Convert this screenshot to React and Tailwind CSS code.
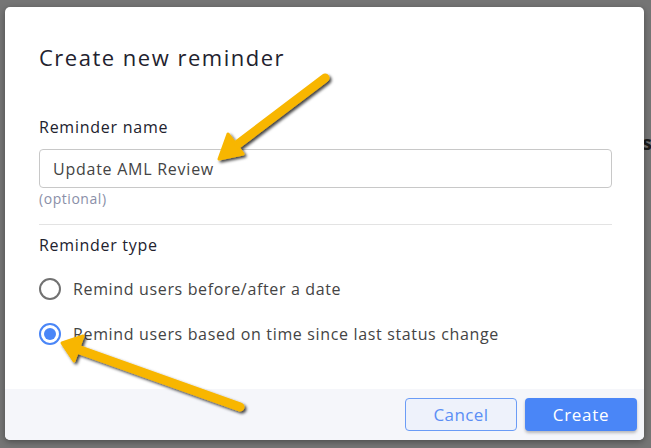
import React from "react";

const font = { fontFamily: '"Open Sans", "Noto Sans", sans-serif' };

const Arrows = () => (
  <svg
    className="absolute inset-0 pointer-events-none z-20"
    width="651"
    height="448"
    viewBox="0 0 651 448"
  >
    <defs>
      <filter id="sh" x="-20%" y="-20%" width="140%" height="140%">
        <feDropShadow dx="2" dy="2" stdDeviation="1.6" floodColor="#000" floodOpacity="0.75" />
      </filter>
    </defs>
    <g filter="url(#sh)" fill="#f8b600" stroke="#f8b600" strokeLinecap="round" strokeLinejoin="round">
      {/* arrow to name input */}
      <line x1="325" y1="78" x2="234" y2="147" strokeWidth="9" />
      <polygon points="219,159 243,154 228,134" strokeWidth="3" />
      {/* arrow to second radio */}
      <line x1="240" y1="407" x2="80" y2="350" strokeWidth="9" />
      <polygon points="62,343 83,336 74,361" strokeWidth="3" />
    </g>
  </svg>
);

const Radio = ({ checked, label }) => (
  <div className="flex items-center h-[24px]">
    {checked ? (
      <span className="w-[22px] h-[22px] rounded-full border-2 border-[#4a86f7] flex items-center justify-center">
        <span className="w-[12px] h-[12px] rounded-full bg-[#4a86f7]" />
      </span>
    ) : (
      <span className="w-[22px] h-[22px] rounded-full border-2 border-[#727272]" />
    )}
    <span className="ml-[12px] text-[16px] tracking-[0.65px] text-[#444]" style={font}>
      {label}
    </span>
  </div>
);

export default function App() {
  return (
    <div className="relative w-[651px] h-[448px] bg-[#757575] overflow-hidden pt-[7px] pl-[5px]">
      <span className="absolute left-[642px] top-[128px] text-[20px] font-bold text-[#1b1b1b]" style={font}>
        s
      </span>
      <div className="relative z-10 w-[639px] h-[433px] bg-white rounded-[5px] flex flex-col overflow-hidden shadow-[0_2px_6px_rgba(0,0,0,0.35)]">
        <div className="flex-1 px-[34px] pt-[37px]" style={font}>
          <h1 className="text-[22px] leading-[26px] text-[#22222e] tracking-[1.5px]">Create new reminder</h1>

          <div className="mt-[47px] text-[16px] leading-[20px] text-[#22222e] tracking-[0.75px]">Reminder name</div>
          <div className="mt-[12px] w-[573px] h-[39px] border border-[#c8c8c8] rounded-[4px] flex items-center px-[13px] text-[16px] tracking-[0.75px] text-[#444]">
            Update AML Review
          </div>
          <div className="mt-[2px] text-[14px] leading-[18px] tracking-[0.55px] text-[#8a8fa8]">(optional)</div>

          <div className="mt-[16px] w-[573px] h-px bg-[#e3e3e3]" />

          <div className="mt-[10px] text-[16px] leading-[20px] tracking-[0.7px] text-[#22222e]">Reminder type</div>

          <div className="mt-[22px] flex flex-col gap-[21px]">
            <Radio label="Remind users before/after a date" />
            <Radio checked label="Remind users based on time since last status change" />
          </div>
        </div>

        <div className="h-[51px] bg-[#f5f6fa] flex justify-end items-center gap-[8px] pr-[7px]" style={font}>
          <button className="w-[112px] h-[33px] rounded-[4px] border border-[#6b9cf6] bg-[#eef2fb] text-[#5b8ef5] text-[17px] tracking-[0.4px]">
            Cancel
          </button>
          <button className="w-[112px] h-[33px] rounded-[4px] bg-[#4a86f7] text-white text-[17px] tracking-[0.7px] shadow-[0_2px_3px_rgba(0,0,0,0.25)]">
            Create
          </button>
        </div>
      </div>
      <Arrows />
    </div>
  );
}
